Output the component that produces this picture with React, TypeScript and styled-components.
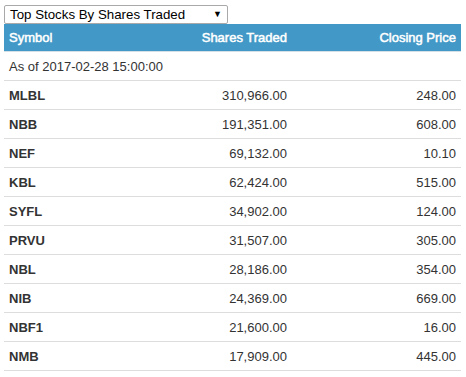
import React, { FC } from 'react'
import styled, { createGlobalStyle } from 'styled-components'

type Stock = {
  symbol: string,
  shares: string,
  price: string
}

const stocks: Stock[] = [
  { symbol: 'MLBL', shares: '310,966.00', price: '248.00' },
  { symbol: 'NBB', shares: '191,351.00', price: '608.00' },
  { symbol: 'NEF', shares: '69,132.00', price: '10.10' },
  { symbol: 'KBL', shares: '62,424.00', price: '515.00' },
  { symbol: 'SYFL', shares: '34,902.00', price: '124.00' },
  { symbol: 'PRVU', shares: '31,507.00', price: '305.00' },
  { symbol: 'NBL', shares: '28,186.00', price: '354.00' },
  { symbol: 'NIB', shares: '24,369.00', price: '669.00' },
  { symbol: 'NBF1', shares: '21,600.00', price: '16.00' },
  { symbol: 'NMB', shares: '17,909.00', price: '445.00' },
]

const GlobalStyle = createGlobalStyle`
  body {
    margin: 0;
    padding: 4px 5px 4px 4px;
    background: #fff;
    font-family: "Liberation Sans", Arial, sans-serif;
    font-size: 13px;
    color: #333;
  }
`

const Container = styled.div`
  width: 457px;
`

const Select = styled.div`
  display: flex;
  align-items: center;
  justify-content: space-between;
  box-sizing: border-box;
  width: 224px;
  height: 19px;
  margin-top: 1px;
  padding: 0 5px 0 5px;
  border: 1px solid #a9a9a9;
  border-radius: 2px;
  font-size: 13.3px;
  color: #000;
`

const Arrow = styled.span`
  font-size: 9px;
  line-height: 1;
`

const Grid = styled.div`
  display: grid;
  grid-template-columns: 1fr 153px 169px;
`

const Header = styled(Grid)`
  height: 28px;
  background-color: #4298c6;
  border-bottom: 1px solid #d4dfe6;
  box-sizing: border-box;
`

// the header is faux-bold: regular glyph widths, thickened strokes
const HeaderCell = styled.div<{ $right?: boolean }>`
  display: flex;
  align-items: center;
  justify-content: ${({ $right }) => ($right ? 'flex-end' : 'flex-start')};
  padding: 0 5px 1px 5px;
  color: #fff;
  font-weight: normal;
  -webkit-text-stroke: 0.5px #fff;
`

const Note = styled.div`
  display: flex;
  align-items: center;
  height: 29px;
  padding: 0 5px;
  border-bottom: 1px solid #ddd;
  box-sizing: border-box;
`

const Row = styled(Grid)`
  height: 29px;
  border-bottom: 1px solid #ddd;
  box-sizing: border-box;
`

const Cell = styled.div<{ $right?: boolean, $bold?: boolean }>`
  display: flex;
  align-items: center;
  justify-content: ${({ $right }) => ($right ? 'flex-end' : 'flex-start')};
  padding: 1px 5px 0 5px;
  font-weight: ${({ $bold }) => ($bold ? 'bold' : 'normal')};
`

const App: FC = () => {
  return (
    <Container>
      <GlobalStyle />
      <Select>
        <span>Top Stocks By Shares Traded</span>
        <Arrow>▼</Arrow>
      </Select>
      <Header>
        <HeaderCell>Symbol</HeaderCell>
        <HeaderCell $right>Shares Traded</HeaderCell>
        <HeaderCell $right>Closing Price</HeaderCell>
      </Header>
      <Note>As of 2017-02-28 15:00:00</Note>
      {stocks.map(item => (
        <Row key={item.symbol}>
          <Cell $bold>{item.symbol}</Cell>
          <Cell $right>{item.shares}</Cell>
          <Cell $right>{item.price}</Cell>
        </Row>
      ))}
    </Container>
  )
}

export default App
